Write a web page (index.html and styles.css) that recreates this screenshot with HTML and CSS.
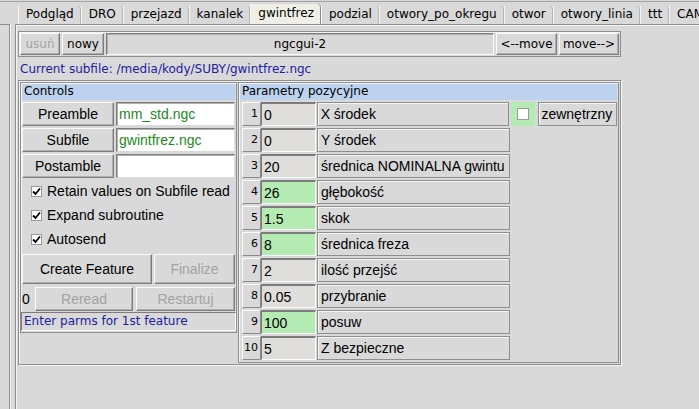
FILE: index.html
```html
<!DOCTYPE html>
<html>
  <head>
    <meta charset="utf-8" />
    <title>ngcgui</title>
    <link rel="stylesheet" href="styles.css">
  </head>
  <body>
    <div class="topline"></div>
    <div class="tabbar">
      <div class="tab">Podgląd</div>
      <div class="tab">DRO</div>
      <div class="tab">przejazd</div>
      <div class="tab">kanalek</div>
      <div class="tab active">gwintfrez</div>
      <div class="tab">podzial</div>
      <div class="tab">otwory_po_okregu</div>
      <div class="tab">otwor</div>
      <div class="tab">otwory_linia</div>
      <div class="tab">ttt</div>
      <div class="tab">CAM</div>
    </div>

    <div class="main">
      <div class="side"></div>
      <div class="page">
        <div class="toolbar">
          <div class="btn small disabled w-usun">usuń</div>
          <div class="btn small w-nowy">nowy</div>
          <div class="namefield">ngcgui-2</div>
          <div class="btn small w-movel">&lt;--move</div>
          <div class="btn small w-mover">move--&gt;</div>
        </div>

        <div class="subfile">Current subfile: /media/kody/SUBY/gwintfrez.ngc</div>

        <div class="frame">
          <div class="controls">
            <div class="header">Controls</div>
            <div class="filerow">
              <div class="btn filebtn">Preamble</div>
              <div class="fileentry">mm_std.ngc</div>
            </div>
            <div class="filerow">
              <div class="btn filebtn">Subfile</div>
              <div class="fileentry">gwintfrez.ngc</div>
            </div>
            <div class="filerow">
              <div class="btn filebtn">Postamble</div>
              <div class="fileentry"></div>
            </div>

            <div class="check first">
              <span class="box"><svg width="9" height="9" viewBox="0 0 9 9"><path d="M1 4.5 L3.5 7 L8 1.5" fill="none" stroke="#000" stroke-width="1.8"/></svg></span>
              Retain values on Subfile read
            </div>
            <div class="check">
              <span class="box"><svg width="9" height="9" viewBox="0 0 9 9"><path d="M1 4.5 L3.5 7 L8 1.5" fill="none" stroke="#000" stroke-width="1.8"/></svg></span>
              Expand subroutine
            </div>
            <div class="check">
              <span class="box"><svg width="9" height="9" viewBox="0 0 9 9"><path d="M1 4.5 L3.5 7 L8 1.5" fill="none" stroke="#000" stroke-width="1.8"/></svg></span>
              Autosend
            </div>

            <div class="actrow">
              <div class="btn create">Create Feature</div>
              <div class="btn disabled finalize">Finalize</div>
            </div>
            <div class="rerow">
              <span class="count">0</span>
              <div class="btn disabled reread">Reread</div>
              <div class="btn disabled restart">Restartuj</div>
            </div>
            <div class="status">Enter parms for 1st feature</div>
          </div>

          <div class="params">
            <div class="header">Parametry pozycyjne</div>
            <div class="prow">
              <div class="idx">1</div>
              <div class="pentry">0</div>
              <div class="plabel">X środek</div>
              <div class="optbox"><span class="cbox"></span></div>
              <div class="optlabel">zewnętrzny</div>
            </div>
            <div class="prow">
              <div class="idx">2</div>
              <div class="pentry">0</div>
              <div class="plabel">Y środek</div>
            </div>
            <div class="prow">
              <div class="idx">3</div>
              <div class="pentry">20</div>
              <div class="plabel">średnica NOMINALNA gwintu</div>
            </div>
            <div class="prow">
              <div class="idx">4</div>
              <div class="pentry changed">26</div>
              <div class="plabel">głębokość</div>
            </div>
            <div class="prow">
              <div class="idx">5</div>
              <div class="pentry changed">1.5</div>
              <div class="plabel">skok</div>
            </div>
            <div class="prow">
              <div class="idx">6</div>
              <div class="pentry changed">8</div>
              <div class="plabel">średnica freza</div>
            </div>
            <div class="prow">
              <div class="idx">7</div>
              <div class="pentry">2</div>
              <div class="plabel">ilość przejść</div>
            </div>
            <div class="prow">
              <div class="idx">8</div>
              <div class="pentry">0.05</div>
              <div class="plabel">przybranie</div>
            </div>
            <div class="prow">
              <div class="idx">9</div>
              <div class="pentry changed">100</div>
              <div class="plabel">posuw</div>
            </div>
            <div class="prow">
              <div class="idx">10</div>
              <div class="pentry">5</div>
              <div class="plabel">Z bezpieczne</div>
            </div>
          </div>
        </div>
      </div>
    </div>
  </body>
</html>
```

FILE: styles.css
```css
* {
  margin: 0;
  padding: 0;
  box-sizing: border-box;
}

body {
  width: 699px;
  height: 409px;
  overflow: hidden;
  background-color: #d9d9d9;
  font: 14px "Liberation Sans", Arial, sans-serif;
  color: #000;
}

.topline {
  height: 1px;
  margin-top: 1px;
  background-color: #a3a3a3;
}

/* notebook tabs */
.tabbar {
  display: flex;
  align-items: flex-end;
  height: 22px;
  padding-left: 18px;
  font: 12px "DejaVu Sans", sans-serif;
}

.tab {
  height: 18px;
  line-height: 17px;
  padding: 0 6px 0 7px;
  border-left: 1px solid #f6f6f6;
  border-right: 1px solid #b4b4b4;
  border-top-right-radius: 4px;
  white-space: nowrap;
}

.tab.active {
  height: 21px;
  line-height: 19px;
  background-color: #efefe5;
  border-right-color: #8e8e8e;
  margin-bottom: -1px;
}

.main {
  display: flex;
  height: 385px;
}

.side {
  width: 10px;
  border-top: 1px solid #8e8e8e;
  border-right: 1px solid #8e8e8e;
  box-shadow: 1px 0 #f4f4f4;
}

.page {
  flex: 1;
  margin-left: 5px;
  padding: 6px 0 0 2px;
  border-top: 1px solid #8e8e8e;
  border-left: 1px solid #8e8e8e;
  box-shadow: inset 1px 1px #f4f4f4;
}

/* generic Tk-like widgets */
.btn {
  display: flex;
  align-items: center;
  justify-content: center;
  background-color: #d9d9d9;
  border: 1px solid;
  border-color: #fbfbfb #7c7c7c #7c7c7c #fbfbfb;
  box-shadow: inset -1px -1px #b0b0b0;
  white-space: nowrap;
}

.btn.small {
  font: 12px "DejaVu Sans", sans-serif;
}

.btn.disabled {
  color: #a3a3a3;
}

/* top toolbar */
.toolbar {
  display: flex;
  gap: 2px;
  width: 603px;
  height: 26px;
  padding: 1px;
  border: 1px solid #8e8e8e;
  box-shadow: inset 1px 1px #f4f4f4;
}

.w-usun { width: 40px; }
.w-nowy { width: 42px; }
.w-movel { width: 61px; }
.w-mover { width: 60px; }

.namefield {
  flex: 1;
  display: flex;
  align-items: center;
  justify-content: center;
  font: 12px "DejaVu Sans", sans-serif;
  border: 1px solid;
  border-color: #7c7c7c #fbfbfb #fbfbfb #7c7c7c;
  box-shadow: inset 1px 1px #b0b0b0;
}

.subfile {
  height: 23px;
  padding: 5px 0 0 2px;
  font: 12px "DejaVu Sans", sans-serif;
  color: #2121a1;
}

/* main frame */
.frame {
  display: flex;
  align-items: flex-start;
  gap: 1px;
  width: 603px;
  height: 285px;
  padding: 1px;
  border: 1px solid #8e8e8e;
  box-shadow: inset 1px 1px #f4f4f4, 1px 1px #f4f4f4;
}

.header {
  height: 16px;
  line-height: 16px;
  padding-left: 2px;
  background-color: #bcd2ee;
  font: 12px "DejaVu Sans", sans-serif;
}

.controls {
  width: 217px;
  padding: 1px;
  border: 1px solid #8e8e8e;
  box-shadow: inset 1px 1px #f4f4f4;
}

.filerow {
  display: flex;
  gap: 2px;
  height: 24px;
  margin-top: 2px;
}

.filebtn {
  width: 92px;
}

.fileentry {
  flex: 1;
  padding: 3px 0 0 2px;
  background-color: #fff;
  color: #1c8a1c;
  border: 1px solid;
  border-color: #7c7c7c #d9d9d9 #d9d9d9 #7c7c7c;
  box-shadow: inset 1px 1px #b0b0b0;
}

.check {
  display: flex;
  align-items: center;
  height: 24px;
  padding-left: 9px;
}

.check.first {
  margin-top: 1px;
}

.box {
  display: flex;
  align-items: center;
  justify-content: center;
  width: 11px;
  height: 11px;
  margin-right: 5px;
  background-color: #fff;
  border: 1px solid #9a9a9a;
}

.actrow {
  display: flex;
  gap: 2px;
  height: 30px;
  margin-top: 3px;
}

.create { width: 130px; }
.finalize { flex: 1; }

.rerow {
  display: flex;
  align-items: stretch;
  height: 24px;
  margin-top: 3px;
}

.count {
  width: 13px;
  display: flex;
  align-items: center;
}

.reread { width: 98px; }

.restart {
  flex: 1;
  margin-left: 3px;
}

.status {
  height: 19px;
  margin: 1px -1px 0 -1px;
  padding: 1px 0 0 2px;
  font: 12px "DejaVu Sans", sans-serif;
  color: #2121a1;
  border: 1px solid;
  border-color: #7c7c7c #fbfbfb #fbfbfb #7c7c7c;
}

/* positional parameters */
.params {
  width: 381px;
  height: 281px;
  padding: 1px;
  border: 1px solid #8e8e8e;
  box-shadow: inset 1px 1px #f4f4f4;
}

.prow {
  display: flex;
  height: 24px;
  margin-top: 2px;
  padding-left: 2px;
}

.idx {
  width: 19px;
  padding: 4px 2px 0 0;
  text-align: right;
  font: 11px "DejaVu Sans", sans-serif;
  border: 1px solid;
  border-color: #fbfbfb #8a8a8a #8a8a8a #fbfbfb;
}

.pentry {
  width: 55px;
  padding: 3px 0 0 2px;
  background-color: #dfdedb;
  border-top: 2px solid #7c7c7c;
  border-left: 1px solid #7c7c7c;
  border-right: 1px solid #fbfbfb;
  border-bottom: 1px solid #fbfbfb;
}

.pentry.changed {
  background-color: #b3ebb3;
}

.plabel {
  width: 193px;
  margin-left: 1px;
  padding: 3px 0 0 3px;
  white-space: nowrap;
  overflow: hidden;
  border: 1px solid #8e8e8e;
  box-shadow: inset 1px 1px #f6f6f6;
}

.optbox {
  display: flex;
  align-items: center;
  justify-content: center;
  width: 25px;
  margin-left: 2px;
  background-color: #b3ebb3;
}

.cbox {
  width: 12px;
  height: 12px;
  background-color: #fff;
  border: 1px solid #9a9a9a;
}

.optlabel {
  width: 79px;
  margin-left: 3px;
  padding: 3px 0 0 2px;
  white-space: nowrap;
  border: 1px solid #8e8e8e;
  box-shadow: inset 1px 1px #f6f6f6;
}
```
